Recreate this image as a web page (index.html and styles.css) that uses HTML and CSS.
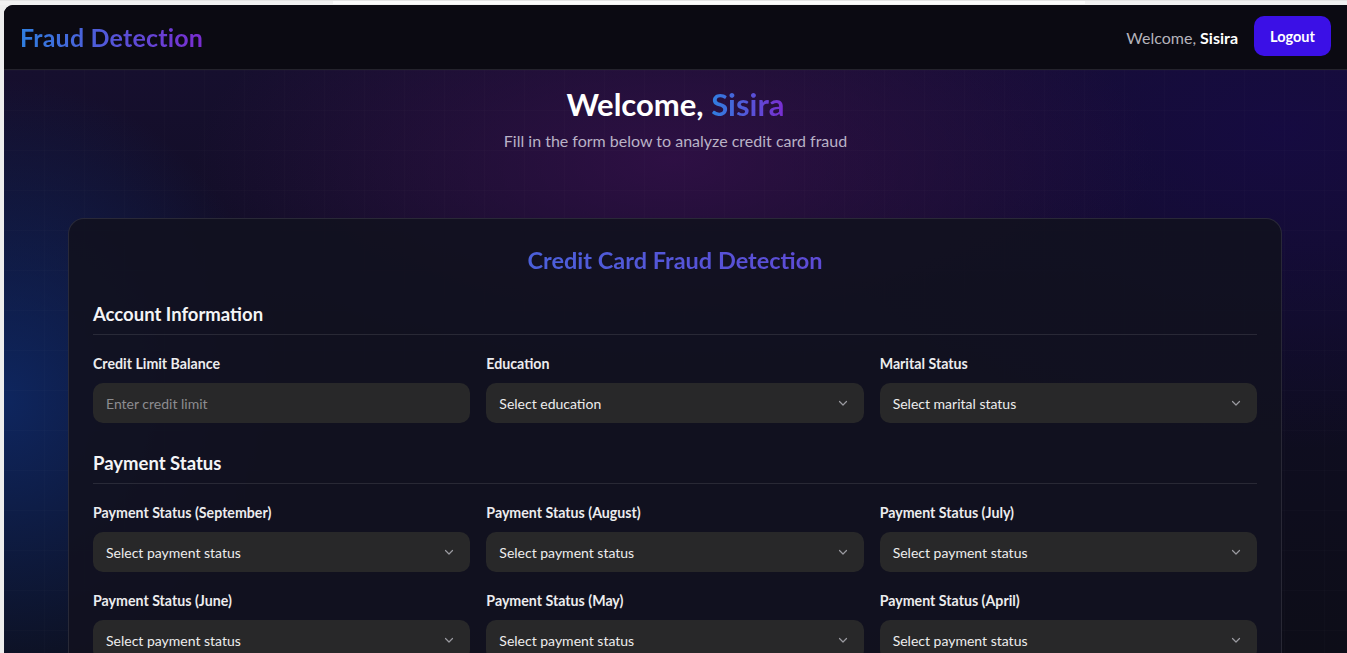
FILE: index.html
```html
<!DOCTYPE html>
<html lang="en">
<head>
<meta charset="utf-8">
<title>Fraud Detection</title>
<link rel="stylesheet" href="styles.css">
</head>
<body>
<div class="chrome-top"><div class="chrome-thumb"></div></div>
<div class="app">
  <header class="navbar">
    <div class="logo">Fraud Detection</div>
    <div class="nav-right">
      <span class="nav-welcome">Welcome, <strong>Sisira</strong></span>
      <button class="logout">Logout</button>
    </div>
  </header>
  <main class="main">
    <section class="hero">
      <h1 class="hero-title">Welcome, <span class="grad">Sisira</span></h1>
      <p class="hero-sub">Fill in the form below to analyze credit card fraud</p>
    </section>
    <section class="card">
      <h2 class="card-title">Credit Card Fraud Detection</h2>

      <div class="section">
        <h3 class="section-title">Account Information</h3>
        <div class="fields">
          <div class="field">
            <label class="label">Credit Limit Balance</label>
            <div class="control"><span class="placeholder">Enter credit limit</span></div>
          </div>
          <div class="field">
            <label class="label">Education</label>
            <div class="control select"><span>Select education</span><svg class="chev" viewBox="0 0 12 12"><path d="M2.5 4.5 L6 8 L9.5 4.5"/></svg></div>
          </div>
          <div class="field">
            <label class="label">Marital Status</label>
            <div class="control select"><span>Select marital status</span><svg class="chev" viewBox="0 0 12 12"><path d="M2.5 4.5 L6 8 L9.5 4.5"/></svg></div>
          </div>
        </div>
      </div>

      <div class="section">
        <h3 class="section-title">Payment Status</h3>
        <div class="fields">
          <div class="field">
            <label class="label">Payment Status (September)</label>
            <div class="control select"><span>Select payment status</span><svg class="chev" viewBox="0 0 12 12"><path d="M2.5 4.5 L6 8 L9.5 4.5"/></svg></div>
          </div>
          <div class="field">
            <label class="label">Payment Status (August)</label>
            <div class="control select"><span>Select payment status</span><svg class="chev" viewBox="0 0 12 12"><path d="M2.5 4.5 L6 8 L9.5 4.5"/></svg></div>
          </div>
          <div class="field">
            <label class="label">Payment Status (July)</label>
            <div class="control select"><span>Select payment status</span><svg class="chev" viewBox="0 0 12 12"><path d="M2.5 4.5 L6 8 L9.5 4.5"/></svg></div>
          </div>
          <div class="field">
            <label class="label">Payment Status (June)</label>
            <div class="control select"><span>Select payment status</span><svg class="chev" viewBox="0 0 12 12"><path d="M2.5 4.5 L6 8 L9.5 4.5"/></svg></div>
          </div>
          <div class="field">
            <label class="label">Payment Status (May)</label>
            <div class="control select"><span>Select payment status</span><svg class="chev" viewBox="0 0 12 12"><path d="M2.5 4.5 L6 8 L9.5 4.5"/></svg></div>
          </div>
          <div class="field">
            <label class="label">Payment Status (April)</label>
            <div class="control select"><span>Select payment status</span><svg class="chev" viewBox="0 0 12 12"><path d="M2.5 4.5 L6 8 L9.5 4.5"/></svg></div>
          </div>
        </div>
      </div>
    </section>
  </main>
</div>
</body>
</html>
```

FILE: styles.css
```css
* { box-sizing: border-box; }
html, body { margin: 0; padding: 0; }
body {
  background: #ededed;
  font-family: "Lato", "Noto Sans", sans-serif;
  height: 653px;
  overflow: hidden;
  padding-left: 4px;
}
.chrome-top {
  height: 5px;
  margin-left: -4px;
  background: #f1f1f1;
  border-top: 1px solid #e3e3e3;
}
.chrome-thumb {
  margin-left: 333px;
  width: 752px;
  height: 3px;
  background: #fbfbfb;
}
.app {
  border-top-left-radius: 9px;
  overflow: hidden;
  background: #0b0a11;
  height: 648px;
}
.navbar {
  height: 65px;
  display: flex;
  align-items: center;
  justify-content: space-between;
  padding: 0 16px 0 16px;
  background: #0b0a12;
  border-bottom: 1px solid #24232c;
}
.logo {
  font-size: 25px;
  letter-spacing: 0.2px;
  font-weight: 700;
  background: linear-gradient(90deg, #2f7fe0, #7a2cd0);
  -webkit-background-clip: text;
  background-clip: text;
  color: transparent;
  line-height: 30px;
  margin-top: -1px;
}
.nav-right {
  display: flex;
  align-items: center;
  gap: 16px;
}
.nav-welcome {
  color: #b5b3bb;
  font-size: 16px;
}
.nav-welcome strong { color: #ffffff; font-weight: 700; }
.logout {
  background: #3b10e6;
  color: #fff;
  border: 0;
  border-radius: 10px;
  font-family: inherit;
  font-size: 14.5px;
  font-weight: 700;
  width: 77px;
  height: 40px;
  padding: 0;
  margin-top: -2px;
}
.main {
  height: 583px;
  background-color: #0e0c1f;
  background-image:
    linear-gradient(rgba(255,255,255,0.012) 1px, transparent 1px),
    linear-gradient(90deg, rgba(255,255,255,0.012) 1px, transparent 1px),
    radial-gradient(ellipse 480px 210px at 670px 90px, rgba(52,16,74,0.8), transparent 100%),
    radial-gradient(ellipse 280px 320px at 0px 330px, rgba(14,44,110,0.8), transparent 100%),
    radial-gradient(ellipse 520px 320px at 1280px 60px, rgba(22,10,70,0.8), transparent 100%),
    linear-gradient(180deg, #160f2e 0%, #0f0d22 50%, #0d0d18 100%);
  background-size: 40px 40px, 40px 40px, auto, auto, auto, auto;
  padding-top: 16px;
}
.hero { text-align: center; }
.hero-title {
  margin: 0;
  font-size: 31px;
  line-height: 36px;
  font-weight: 700;
  color: #ffffff;
}
.grad {
  background: linear-gradient(90deg, #2f7fe0, #7a2cd0);
  -webkit-background-clip: text;
  background-clip: text;
  color: transparent;
}
.hero-sub {
  margin: 8px 0 0;
  font-size: 16px;
  line-height: 22px;
  color: #b9b2c6;
}
.card {
  margin: 66px 0 0 64px;
  width: 1214px;
  border: 1px solid rgba(255,255,255,0.1);
  border-radius: 16px;
  background: rgba(17,17,32,0.92);
  padding: 26px 24px 30px;
}
.card-title {
  margin: 0;
  text-align: center;
  font-size: 23.5px;
  line-height: 30px;
  font-weight: 700;
  background: linear-gradient(90deg, #2f7fe0, #7a2cd0);
  -webkit-background-clip: text;
  background-clip: text;
  color: transparent;
}
.section { margin-top: 26px; }
.section + .section { margin-top: 27px; }
.section-title {
  margin: 0 0 20px;
  font-size: 18.5px;
  line-height: 26px;
  font-weight: 700;
  color: #f4f4f6;
  padding-bottom: 7px;
  border-bottom: 1px solid rgba(255,255,255,0.1);
}
.fields {
  display: grid;
  grid-template-columns: repeat(3, 1fr);
  column-gap: 16px;
  row-gap: 20px;
}
.field { display: flex; flex-direction: column; gap: 10px; }
.label {
  font-size: 14.2px;
  line-height: 18px;
  font-weight: 700;
  color: #ececee;
}
.control {
  height: 40px;
  background: #282829;
  border-radius: 10px;
  padding: 0 13px;
  display: flex;
  align-items: center;
  font-size: 14px;
  color: #ededed;
}
.placeholder { color: #8c8c90; }
.select { justify-content: space-between; }
.chev {
  width: 12px;
  height: 12px;
  margin-right: 2px;
  fill: none;
  stroke: #9a9aa0;
  stroke-width: 1.2;
  stroke-linecap: round;
  stroke-linejoin: round;
}
```
